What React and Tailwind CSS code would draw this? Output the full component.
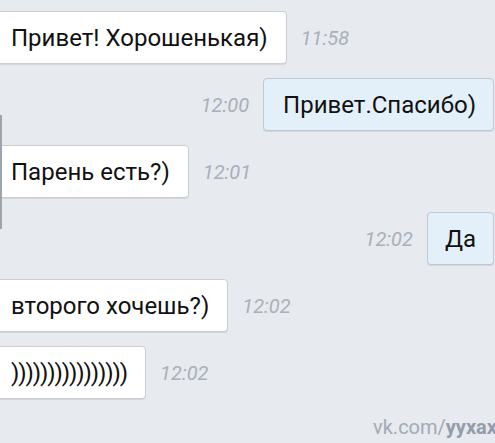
import React from "react";

const font = { fontFamily: "Roboto, 'Noto Sans', sans-serif" };

function Incoming({ text, time, tight }) {
  return (
    <div className="flex items-center h-[53px]">
      <div className={`ml-[-10px] h-full flex items-center pl-5 pr-[18px] bg-white border border-[#c9ced5] rounded-[4px] shadow-[0_1px_0_#d3d7dc] text-[24px] text-[#111] leading-none ${tight ? "tracking-[-1.1px]" : ""}`}>
        {text}
      </div>
      <div className="ml-[14px] text-[20px] italic text-[#a9b0ba] leading-none">{time}</div>
    </div>
  );
}

function Outgoing({ text, time, px }) {
  return (
    <div className="flex items-center justify-end h-[53px] pr-[1px]">
      <div className="mr-[14px] text-[20px] italic text-[#a9b0ba] leading-none">{time}</div>
      <div className={`h-full flex items-center ${px} bg-[#e3f0fa] border border-[#bfc9d3] rounded-[4px] shadow-[0_1px_0_#cfd6dd] text-[24px] text-[#111] leading-none`}>
        {text}
      </div>
    </div>
  );
}

export default function App() {
  return (
    <div style={font} className="relative w-[495px] h-[443px] overflow-hidden bg-[#e7eaee]">
      <div className="absolute left-0 top-[115px] w-[2px] h-[114px] bg-[#9ea4ab]" />
      <div className="flex flex-col gap-[14px] pt-[11px]">
        <Incoming text="Привет! Хорошенькая)" time="11:58" />
        <Outgoing text="Привет.Спасибо)" time="12:00" px="pl-[19px] pr-[17px]" />
        <Incoming text="Парень есть?)" time="12:01" />
        <Outgoing text="Да" time="12:02" px="pl-[17px] pr-[17px]" />
        <Incoming text="второго хочешь?)" time="12:02" />
        <Incoming text="))))))))))))))))" time="12:02" tight />
      </div>
      <div className="absolute right-[-2px] bottom-[6px] text-[20px] text-[#a2aab5] leading-none whitespace-nowrap">
        vk.com/<span className="font-bold text-[#939dab]">yyxax</span>
      </div>
    </div>
  );
}
